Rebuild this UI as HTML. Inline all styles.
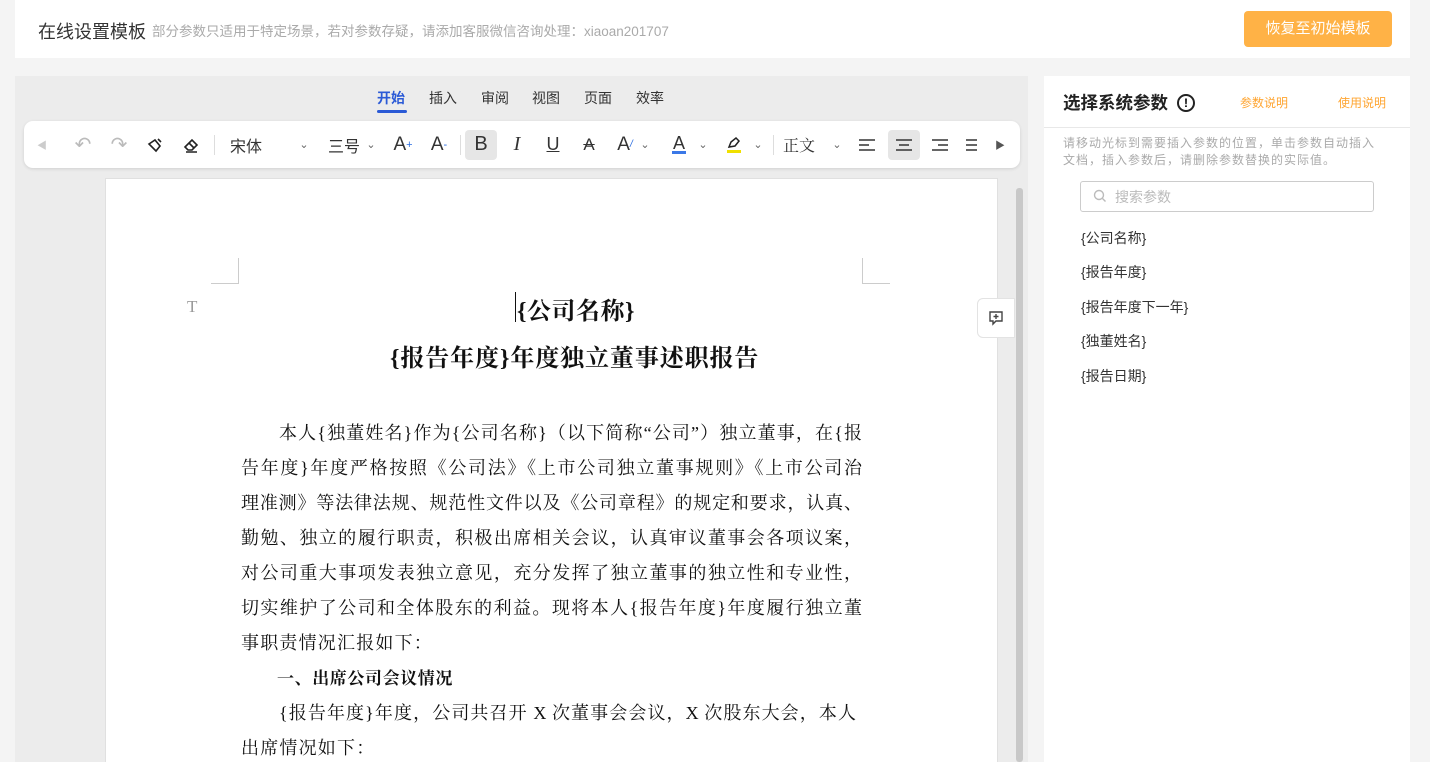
<!DOCTYPE html>
<html><head><meta charset="utf-8">
<style>
*{margin:0;padding:0;box-sizing:border-box}
html,body{width:1430px;height:762px;overflow:hidden}
body{background:#f4f4f4;font-family:"Liberation Sans","Noto Sans CJK SC",sans-serif;position:relative}
.abs{position:absolute}
.top{left:15px;top:0;width:1395px;height:58px;background:#fff}
.editor{left:15px;top:76px;width:1013px;height:686px;background:#ececec}
.right{left:1044px;top:76px;width:366px;height:686px;background:#fff}
.tb{left:24px;top:121px;width:996px;height:47px;background:#fff;border-radius:9px;box-shadow:0 1px 3px rgba(0,0,0,.12)}
.ic{position:absolute;top:0;height:47px;display:flex;align-items:center;justify-content:center;color:#333;font-size:16px}
.doc{left:105px;top:178px;width:893px;height:600px;background:#fff;border:1px solid #e0e0e0}
.serif{font-family:"Liberation Serif","Noto Serif CJK SC",serif;color:#111}
.ln{position:absolute;left:241px;width:621px;font-size:18px;text-align:justify;text-align-last:justify;white-space:nowrap;height:35px;line-height:35px}
.tab{position:absolute;top:88px;font-size:14px;color:#333}
.param{position:absolute;left:1081px;font-size:14px;color:#333}
</style></head><body>
<div class="abs top"></div>
<div class="abs" style="left:38px;top:18px;font-size:18px;color:#333">在线设置模板</div>
<div class="abs" style="left:152px;top:20px;font-size:13.5px;color:#aaa">部分参数只适用于特定场景，若对参数存疑，请添加客服微信咨询处理：xiaoan201707</div>
<div class="abs" style="left:1244px;top:11px;width:148px;height:36px;background:#ffb246;border-radius:4px;color:#fff;font-size:15px;line-height:36px;text-align:center">恢复至初始模板</div>

<div class="abs editor"></div>
<div class="tab" style="left:377px;color:#2b5ad6;font-weight:bold">开始</div>
<div class="abs" style="left:377px;top:110px;width:30px;height:3px;background:#2b5ad6;border-radius:2px"></div>
<div class="tab" style="left:429px">插入</div>
<div class="tab" style="left:481px">审阅</div>
<div class="tab" style="left:532px">视图</div>
<div class="tab" style="left:584px">页面</div>
<div class="tab" style="left:636px">效率</div>

<div class="abs tb">
 <div class="ic" style="left:10px;width:16px;color:#ccc;font-size:10px">◀</div>
 <div class="ic" style="left:48px;width:22px;color:#bbb;font-size:20px">↶</div>
 <div class="ic" style="left:84px;width:22px;color:#bbb;font-size:20px">↷</div>
 <div class="ic" style="left:120px;width:22px"><svg width="18" height="18" viewBox="0 0 18 18" fill="none" stroke="#222" stroke-width="1.6"><path d="M3 8l6-4 5 6-4 5z M12 3l3 3"/></svg></div>
 <div class="ic" style="left:156px;width:22px"><svg width="18" height="18" viewBox="0 0 18 18" fill="none" stroke="#222" stroke-width="1.6"><path d="M3 11l7-7 5 5-5 5H6z M7 7l5 5 M4 16h11"/></svg></div>
 <div class="abs" style="left:190px;top:14px;width:1px;height:20px;background:#ddd"></div>
 <div class="ic" style="left:202px;width:40px">宋体</div>
 <div class="ic" style="left:272px;width:16px;font-size:11px;color:#666">⌄</div>
 <div class="ic" style="left:302px;width:36px">三号</div>
 <div class="ic" style="left:340px;width:14px;font-size:11px;color:#666">⌄</div>
 <div class="ic" style="left:368px;width:22px;font-size:19px">A<sup style="color:#2b6de0;font-size:11px">+</sup></div>
 <div class="ic" style="left:404px;width:22px;font-size:19px">A<sup style="color:#2b6de0;font-size:11px">-</sup></div>
 <div class="abs" style="left:436px;top:14px;width:1px;height:20px;background:#ddd"></div>
 <div class="abs" style="left:441px;top:9px;width:32px;height:30px;background:#e6e6e6;border-radius:4px"></div>
 <div class="ic" style="left:441px;width:32px;font-size:20px">B</div>
 <div class="ic" style="left:482px;width:22px;font-size:20px;font-style:italic;font-family:'Liberation Serif'">I</div>
 <div class="ic" style="left:518px;width:22px;font-size:18px;text-decoration:underline">U</div>
 <div class="ic" style="left:554px;width:22px;font-size:17px;text-decoration:line-through">A</div>
 <div class="ic" style="left:590px;width:22px;font-size:19px">A<span style="color:#2b6de0;font-size:10px;font-style:italic">/</span></div>
 <div class="ic" style="left:614px;width:14px;font-size:11px;color:#666">⌄</div>
 <div class="ic" style="left:644px;width:22px;font-size:18px;flex-direction:column;line-height:16px">A<span style="display:block;width:14px;height:3px;background:#3b78e7"></span></div>
 <div class="ic" style="left:672px;width:14px;font-size:11px;color:#666">⌄</div>
 <div class="ic" style="left:699px;width:22px;flex-direction:column"><svg width="16" height="14" viewBox="0 0 16 14" fill="none" stroke="#222" stroke-width="1.5"><path d="M3 11l2-5 5-4 3 3-4 5z"/></svg><span style="display:block;width:14px;height:3px;background:#f0e000"></span></div>
 <div class="ic" style="left:727px;width:14px;font-size:11px;color:#666">⌄</div>
 <div class="abs" style="left:749px;top:14px;width:1px;height:20px;background:#ddd"></div>
 <div class="ic" style="left:758px;width:34px;font-family:'Noto Serif CJK SC',serif">正文</div>
 <div class="ic" style="left:806px;width:14px;font-size:11px;color:#666">⌄</div>
 <div class="ic" style="left:832px;width:22px"><svg width="18" height="14" stroke="#333" stroke-width="1.4"><path d="M1 2h16M1 7h10M1 12h16"/></svg></div>
 <div class="abs" style="left:864px;top:9px;width:32px;height:30px;background:#e6e6e6;border-radius:4px"></div>
 <div class="ic" style="left:869px;width:22px"><svg width="18" height="14" stroke="#333" stroke-width="1.4"><path d="M1 2h16M4 7h10M1 12h16"/></svg></div>
 <div class="ic" style="left:905px;width:22px"><svg width="18" height="14" stroke="#333" stroke-width="1.4"><path d="M1 2h16M7 7h10M1 12h16"/></svg></div>
 <div class="ic" style="left:941px;width:18px;overflow:hidden;justify-content:flex-start"><svg width="12" height="14" stroke="#333" stroke-width="1.4"><path d="M1 2h16M1 7h16M1 12h16"/></svg></div>
 <div class="ic" style="left:968px;width:16px;font-size:10px;color:#555">▶</div>
</div>

<div class="abs doc"></div>
<div class="abs" style="left:1016px;top:188px;width:7px;height:574px;background:#c8c8c8;border-radius:3px"></div>
<div class="abs" style="left:211px;top:258px;width:28px;height:26px;border-right:1px solid #ccc;border-bottom:1px solid #ccc"></div>
<div class="abs" style="left:862px;top:258px;width:28px;height:26px;border-left:1px solid #ccc;border-bottom:1px solid #ccc"></div>
<div class="abs serif" style="left:187px;top:297px;font-size:17px;color:#999">T</div>
<div class="abs" style="left:515px;top:292px;width:1px;height:30px;background:#111"></div>
<div class="abs serif" style="left:517px;top:291px;font-size:24px;font-weight:bold;letter-spacing:0.5px">{公司名称}</div>
<div class="abs serif" style="left:390px;top:338px;font-size:24px;font-weight:bold;letter-spacing:0.9px">{报告年度}年度独立董事述职报告</div>
<div class="abs" style="left:977px;top:298px;width:38px;height:40px;background:#fff;border:1px solid #e3e3e3;border-radius:6px 0 0 6px;display:flex;align-items:center;justify-content:center"><svg width="16" height="16" viewBox="0 0 16 16" fill="none" stroke="#444" stroke-width="1.4"><path d="M2 2h12v9H8l-3 3v-3H2z M8 4v5M5.5 6.5h5"/></svg></div>

<div class="ln serif" style="top:416px;left:279px;width:583px">本人{独董姓名}作为{公司名称}（以下简称“公司”）独立董事，在{报</div>
<div class="ln serif" style="top:451px">告年度}年度严格按照《公司法》《上市公司独立董事规则》《上市公司治</div>
<div class="ln serif" style="top:486px">理准测》等法律法规、规范性文件以及《公司章程》的规定和要求，认真、</div>
<div class="ln serif" style="top:521px">勤勉、独立的履行职责，积极出席相关会议，认真审议董事会各项议案，</div>
<div class="ln serif" style="top:556px">对公司重大事项发表独立意见，充分发挥了独立董事的独立性和专业性，</div>
<div class="ln serif" style="top:591px">切实维护了公司和全体股东的利益。现将本人{报告年度}年度履行独立董</div>
<div class="ln serif" style="top:626px;text-align-last:left;letter-spacing:1.2px">事职责情况汇报如下：</div>
<div class="ln serif" style="top:661px;left:277px;text-align-last:left;font-weight:bold;font-size:17px;letter-spacing:0.6px">一、出席公司会议情况</div>
<div class="ln serif" style="top:696px;left:279px;width:583px;padding-right:6px">{报告年度}年度，公司共召开 X 次董事会会议，X 次股东大会，本人</div>
<div class="ln serif" style="top:731px;text-align-last:left;letter-spacing:1.2px">出席情况如下：</div>

<div class="abs right"></div>
<div class="abs" style="left:1063px;top:90px;font-size:17.5px;font-weight:bold;color:#222">选择系统参数</div>
<div class="abs" style="left:1177px;top:94px;width:18px;height:18px;border:2px solid #222;border-radius:50%;font-size:12px;font-weight:bold;text-align:center;line-height:14px">!</div>
<div class="abs" style="left:1240px;top:94px;font-size:12px;color:#ffa531">参数说明</div>
<div class="abs" style="left:1338px;top:94px;font-size:12px;color:#ffa531">使用说明</div>
<div class="abs" style="left:1044px;top:127px;width:366px;height:1px;background:#e8e8e8"></div>
<div class="abs" style="left:1063px;top:135px;font-size:12px;line-height:17px;color:#aaa;white-space:nowrap;letter-spacing:1px">请移动光标到需要插入参数的位置，单击参数自动插入<br>文档，插入参数后，请删除参数替换的实际值。</div>
<div class="abs" style="left:1080px;top:181px;width:294px;height:31px;border:1px solid #ccc;border-radius:3px"></div>
<svg class="abs" style="left:1093px;top:189px" width="14" height="14" fill="none" stroke="#bbb" stroke-width="1.4"><circle cx="6" cy="6" r="4.5"/><path d="M9.5 9.5l3 3"/></svg>
<div class="abs" style="left:1115px;top:187px;font-size:14px;color:#bbb">搜索参数</div>
<div class="param" style="top:228px">{公司名称}</div>
<div class="param" style="top:262px">{报告年度}</div>
<div class="param" style="top:297px">{报告年度下一年}</div>
<div class="param" style="top:331px">{独董姓名}</div>
<div class="param" style="top:366px">{报告日期}</div>
</body></html>
